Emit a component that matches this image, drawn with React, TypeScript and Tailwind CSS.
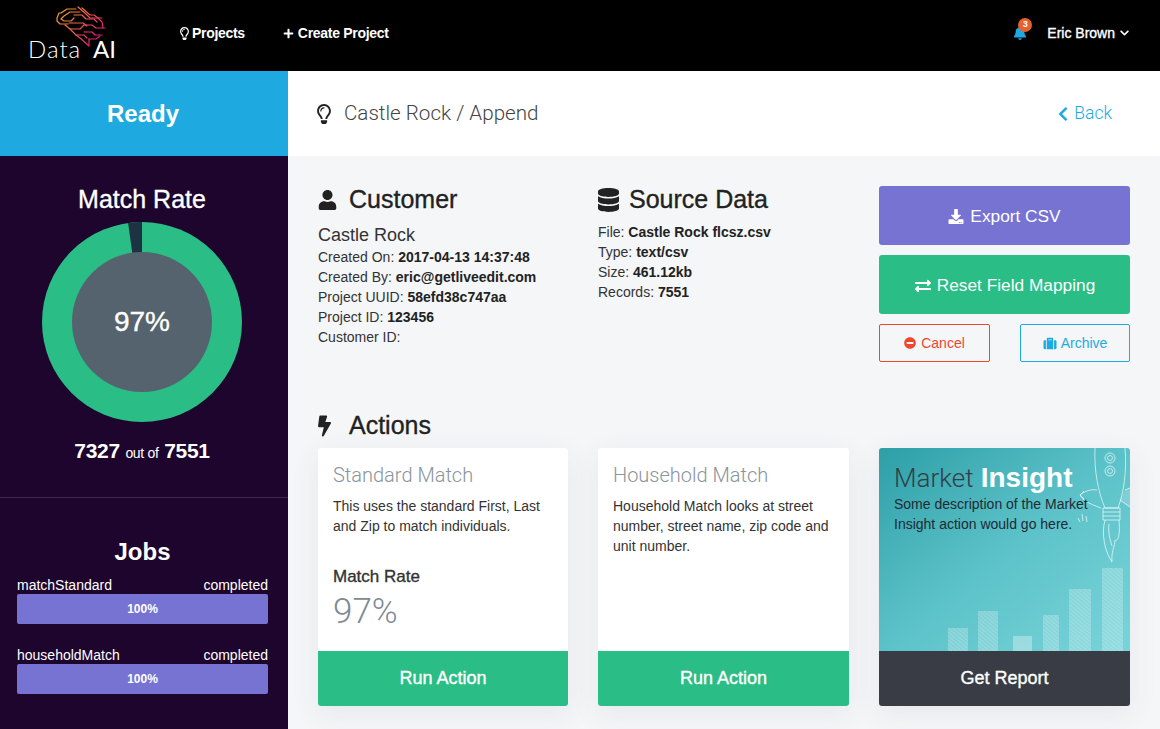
import { FaBell, FaBolt, FaChevronDown, FaChevronLeft, FaDatabase, FaDownload, FaExchangeAlt, FaMinusCircle, FaPlus, FaRegLightbulb, FaSuitcase, FaUser } from "react-icons/fa";

const sans = "font-['Liberation_Sans',Arial,sans-serif]";
const light = "font-['Roboto',sans-serif] font-light";
// Helvetica Neue Medium has no match here, regular plus a thin stroke comes closest
const medium = "font-normal [-webkit-text-stroke:0.35px]";

const Logo = () => (
    <div className="relative w-[100px] h-[71px] ml-[28px]">
        <svg className="absolute left-[28px] top-[6px]" width="50" height="41" viewBox="0 0 50 41" fill="none">
            <defs>
                <linearGradient id="brain" gradientUnits="userSpaceOnUse" x1="3" y1="4" x2="42" y2="36">
                    <stop offset="0" stopColor="#f7a325" />
                    <stop offset="0.5" stopColor="#ee5c50" />
                    <stop offset="1" stopColor="#e3127f" />
                </linearGradient>
            </defs>
            <g stroke="url(#brain)" strokeWidth="1.2" strokeLinejoin="round" strokeLinecap="round">
                <path d="M20 3H11L5 7H3L1 12V15L4 18H12" />
                <path d="M24 6H14L8 10L5 13L8 15H15L18 12" />
                <path d="M26 2L34 9H38L42 12H46" />
                <path d="M22 1L30 8L34 12H42L46 16L47 22" />
                <path d="M18 9H26L30 13H38L41 16" />
                <path d="M9 19L14 23H24L28 19H36L40 22H49" />
                <path d="M13 17H27L31 20" />
                <path d="M14 23L20 29H28L31 32" />
                <path d="M20 29L24 32L33 40V33" />
                <path d="M28 26H36L39 29H46" />
                <path d="M33 33H40L44 30" />
            </g>
        </svg>
        <span className="absolute left-0 top-[35px] text-[24px] leading-[28px] tracking-[1px] text-white font-['Lato',sans-serif] font-light">Data</span>
        <span className="absolute left-[65px] top-[35px] text-[24px] leading-[28px] text-white font-['Lato',sans-serif] font-normal">AI</span>
    </div>
);

const Header = () => (
    <div className="h-[71px] bg-black text-white flex items-center shrink-0">
        <Logo />
        <div className="flex items-center ml-[52px] text-[14px] font-bold tracking-[-0.3px] -mt-[5px]">
            <FaRegLightbulb className="w-[9px] h-[13px] mr-[3px]" />
            Projects
        </div>
        <div className="flex items-center ml-[38px] text-[14px] font-bold tracking-[-0.3px] -mt-[5px]">
            <FaPlus className="w-[11px] h-[11px] mr-[4px]" />
            Create Project
        </div>
        <div className="ml-auto flex items-center -mt-[5px]">
            <div className="relative mr-[20px]">
                <FaBell className="w-[14px] h-[14px] text-[#1eaae0]" />
                <span className="absolute -top-[8px] left-[5px] w-[14px] h-[14px] rounded-full bg-[#e8602c] text-[9px] font-bold flex items-center justify-center">3</span>
            </div>
            <div className={`flex items-center text-[14px] mr-[31px] ${medium}`}>
                Eric Brown
                <FaChevronDown className="w-[9px] h-[10px] ml-[5px]" />
            </div>
        </div>
    </div>
);

const Donut = () => {
    // 97% ring, the missing slice sits just left of twelve o'clock
    const a = (-8 * Math.PI) / 180;
    const x = 100 + 100 * Math.sin(a);
    const y = 100 - 100 * Math.cos(a);
    return (
        <svg width="200" height="200" viewBox="0 0 200 200" className="block">
            <circle cx="100" cy="100" r="100" fill="#2abd85" />
            <path d={`M100 100L${x} ${y}A100 100 0 0 1 100 0Z`} fill="#1d3344" />
            <circle cx="100" cy="100" r="70" fill="#55636e" />
        </svg>
    );
};

const Job = ({ name }: { name: string }) => (
    <div className="mb-[13px]">
        <div className="flex justify-between text-[14px] leading-[20px] text-white translate-y-[1px]">
            <span>{name}</span>
            <span>completed</span>
        </div>
        <div className="h-[30px] rounded-[2px] bg-[#7673d3] text-white text-[12px] font-bold flex items-center justify-center">100%</div>
    </div>
);

const Sidebar = () => (
    <div className="w-[288px] shrink-0 flex flex-col bg-[#1d052e] text-white">
        <div className="h-[85px] bg-[#1eaae0] flex items-center justify-center text-[24px] font-bold pr-[2px]">Ready</div>
        <div className="h-[342px] border-b border-[#3d2a4d] flex flex-col items-center pr-[4px]">
            <div className={`text-[25px] leading-[30px] mt-[28px] mb-[8px] ${medium}`}>Match Rate</div>
            <div className="relative">
                <Donut />
                <div className={`absolute inset-0 flex items-center justify-center text-[28px] ${medium}`}>97%</div>
            </div>
            <div className="mt-[15px] leading-[28px] font-bold text-[21px] tracking-[-0.3px]">
                7327 <span className="text-[14px] font-normal">out of</span> 7551
            </div>
        </div>
        <div className="px-[17px] pr-[20px]">
            <div className="text-center text-[24px] font-bold leading-[28px] mt-[40px] mb-[8px]">Jobs</div>
            <Job name="matchStandard" />
            <div className="h-[7px]" />
            <Job name="householdMatch" />
        </div>
    </div>
);

const TitleBar = () => (
    <div className="h-[85px] bg-white flex items-center pl-[29px] pr-[48px] shrink-0">
        <FaRegLightbulb className="w-[14px] h-[20px] text-[#222] mr-[13px]" />
        <span className={`text-[20.6px] text-[#444] ${light}`}>Castle Rock / Append</span>
        <div className={`ml-auto flex items-center text-[#1eaae0] text-[17.5px] ${light}`}>
            <FaChevronLeft className="w-[10px] h-[16px] mr-[6px]" />
            Back
        </div>
    </div>
);

const Line = ({ label, value }: { label: string; value?: string }) => (
    <div className="text-[14px] leading-[20px] text-[#333]">
        {label}: {value && <b className="text-[#222]">{value}</b>}
    </div>
);

const Heading = ({ icon, title }: { icon: React.ReactNode; title: string }) => (
    <div className={`flex items-center h-[28px] text-[#222] text-[25px] ${medium}`}>
        <span className="w-[31px] flex items-center">{icon}</span>
        {title}
    </div>
);

const ActionCard = ({ title, text, rate }: { title: string; text: string; rate?: boolean }) => (
    <div className="h-[258px] rounded-[3px] overflow-hidden bg-white flex flex-col shadow-[0_8px_30px_rgba(60,70,90,0.08)]">
        <div className="flex-1 px-[15px]">
            <div className={`text-[20px] leading-[26px] text-[#8a949c] mt-[14px] ${light}`}>{title}</div>
            <div className="text-[14px] leading-[20px] text-[#333] mt-[8px]">{text}</div>
            {rate && (
                <>
                    <div className={`text-[17px] text-[#333] leading-[20px] mt-[31px] ${medium}`}>Match Rate</div>
                    <div className={`text-[35px] leading-[40px] text-[#7f8a94] mt-[5px] ${light}`}>97%</div>
                </>
            )}
        </div>
        <div className={`h-[55px] shrink-0 bg-[#2abd85] text-white text-[18px] flex items-center justify-center ${medium}`}>Run Action</div>
    </div>
);

const Rocket = () => (
    <svg className="absolute inset-0" width="251" height="203" viewBox="0 0 251 203" fill="none">
        <defs>
            <pattern id="hatch" width="3" height="3" patternUnits="userSpaceOnUse" patternTransform="rotate(40)">
                <rect width="3" height="3" fill="#ffffff" fillOpacity="0.2" />
                <path d="M0 0H3" stroke="#ffffff" strokeOpacity="0.28" strokeWidth="1" />
            </pattern>
        </defs>
        <g fill="url(#hatch)">
            <rect x="69" y="180" width="20" height="23" />
            <rect x="99" y="163" width="20" height="40" />
            <rect x="164" y="167" width="16" height="36" />
            <rect x="190" y="141" width="22" height="62" />
            <rect x="223" y="120" width="21" height="83" />
        </g>
        <rect x="134" y="188" width="19" height="15" fill="#ffffff" fillOpacity="0.32" />
        <g stroke="#ffffff" strokeOpacity="0.65" strokeWidth="1" strokeLinejoin="round">
            <path d="M216 0C215 22 219 44 226 60H239C245 44 248 22 246 0" />
            <circle cx="231" cy="10" r="5" />
            <circle cx="231" cy="10" r="2.5" />
            <circle cx="231" cy="23" r="5" />
            <circle cx="231" cy="23" r="2.5" />
            <path d="M218 42C212 41 206 43 201 47M205 43L201 47L205 51M201 47C204 52 208 55 222 60" />
            <path d="M246 42L251 40M251 59L241 52" />
            <path d="M224 60H241V72H224Z" />
            <path d="M224 64H241M224 68H241" />
            <path d="M226 72C222 86 226 104 233 114C232 104 236 98 236 92C240 94 241 84 240 72" />
            <path d="M230 76C229 84 231 92 233 98" />
            <path d="M203 66L204 73M207 68L208 74M199 70L201 74" />
        </g>
        <path d="M246 42L251 40V59L241 52Z" fill="#ffffff" fillOpacity="0.18" />
    </svg>
);

const InsightCard = () => (
    <div className="h-[258px] rounded-[3px] overflow-hidden flex flex-col shadow-[0_8px_30px_rgba(60,70,90,0.08)]">
        <div className="relative flex-1 bg-linear-to-br from-[#2b9fa7] via-[#5cc2c9] to-[#78d4d9]">
            <Rocket />
            <div className="relative pl-[15px] pt-[14px]">
                <div className="text-[26px] leading-[32px] text-[#333e48]">
                    <span className={light}>Market</span> <b className="text-white text-[28px]">Insight</b>
                </div>
                <div className="text-[14px] leading-[20px] text-[#1f2a33]">
                    Some description of the Market<br />Insight action would go here.
                </div>
            </div>
        </div>
        <div className={`h-[55px] shrink-0 bg-[#393c45] text-white text-[18px] flex items-center justify-center ${medium}`}>Get Report</div>
    </div>
);

const Buttons = () => (
    <div className="flex flex-col gap-[10px]">
        <div className="h-[59px] pt-[2px] rounded-[3px] bg-[#7673d3] text-white text-[17.3px] flex items-center justify-center">
            <FaDownload className="w-[16px] h-[15px] mr-[6px]" />Export CSV
        </div>
        <div className="h-[59px] pt-[2px] rounded-[3px] bg-[#2abd85] text-white text-[17.3px] flex items-center justify-center">
            <FaExchangeAlt className="w-[18px] h-[16px] mr-[5px]" />Reset Field Mapping
        </div>
        <div className="flex justify-between">
            <div className="w-[111px] h-[38px] rounded-[2px] border border-[#f2452e] text-[#f2452e] text-[14px] flex items-center justify-center">
                <FaMinusCircle className="w-[12px] h-[12px] mr-[5px]" />Cancel
            </div>
            <div className="w-[110px] h-[38px] rounded-[2px] border border-[#1eaae0] text-[#1eaae0] text-[14px] flex items-center justify-center">
                <FaSuitcase className="w-[14px] h-[13px] mr-[4px]" />Archive
            </div>
        </div>
    </div>
);

const Main = () => (
    <div className="flex-1 flex flex-col bg-[#f4f6f8] min-w-0">
        <TitleBar />
        <div className="pl-[30px] pr-[30px]">
            <div className="grid grid-cols-[250px_251px_251px] gap-[30px] pt-[30px] h-[256px]">
                <div>
                    <Heading icon={<FaUser className="w-[19px] h-[20px]" />} title="Customer" />
                    <div className="text-[18px] leading-[24px] text-[#333] mt-[9px]">Castle Rock</div>
                    <Line label="Created On" value="2017-04-13 14:37:48" />
                    <Line label="Created By" value="eric@getliveedit.com" />
                    <Line label="Project UUID" value="58efd38c747aa" />
                    <Line label="Project ID" value="123456" />
                    <Line label="Customer ID" />
                </div>
                <div>
                    <Heading icon={<FaDatabase className="w-[21px] h-[24px]" />} title="Source Data" />
                    <div className="mt-[8px]">
                        <Line label="File" value="Castle Rock flcsz.csv" />
                        <Line label="Type" value="text/csv" />
                        <Line label="Size" value="461.12kb" />
                        <Line label="Records" value="7551" />
                    </div>
                </div>
                <Buttons />
            </div>
            <Heading icon={<FaBolt className="w-[13px] h-[22px]" />} title="Actions" />
            <div className="grid grid-cols-[250px_251px_251px] gap-[30px] mt-[8px]">
                <ActionCard title="Standard Match" text="This uses the standard First, Last and Zip to match individuals." rate />
                <ActionCard title="Household Match" text="Household Match looks at street number, street name, zip code and unit number." />
                <InsightCard />
            </div>
        </div>
    </div>
);

export default function App() {
    return (
        <div className={`w-[1160px] h-[729px] overflow-hidden flex flex-col ${sans}`}>
            <Header />
            <div className="flex flex-1 min-h-0">
                <Sidebar />
                <Main />
            </div>
        </div>
    );
}
